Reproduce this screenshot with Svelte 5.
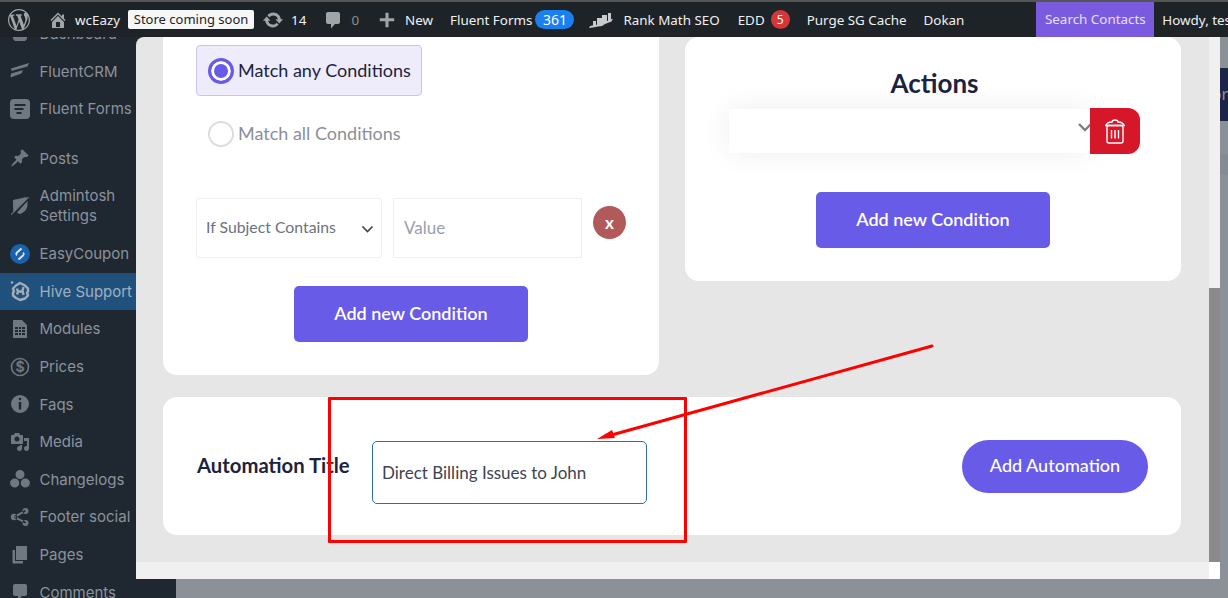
<script lang="ts">
	let title = $state('Direct Billing Issues to John');
	let mode = $state('any');

	const dot = (x: number, y: number, r: number) =>
		`M${x - r} ${y}a${r} ${r} 0 1 0 ${r * 2} 0a${r} ${r} 0 1 0 ${-r * 2} 0z`;

	const comment = 'M5 2h10c1.1 0 2 .9 2 2v8c0 1.1-.9 2-2 2h-3l-4 4.5V14H5c-1.1 0-2-.9-2-2V4c0-1.1.9-2 2-2z';

	const menu = [
		{ label: ['Dashboard'], d: 'M3 1h14v15l-2 2H5l-2-2z', cls: '' },
		{ label: ['FluentCRM'], d: 'M1 7.5 19 2l-1.5 3.5L1.5 10zM1 12.5l12-3.5-1.5 3.5L.5 16.5z', cls: '' },
		{ label: ['Fluent Forms'], d: 'M4 0h12a4 4 0 0 1 4 4v12a4 4 0 0 1-4 4H4a4 4 0 0 1-4-4V4a4 4 0 0 1 4-4zM4.500 5v2h11V5zM4.500 9v2h9V9zM6.500 13v2h5v-2z', cls: 'gap' },
		{ label: ['Posts'], d: 'M10.44 3.02l1.82-1.82 6.36 6.35-1.83 1.82c-1.05-.68-2.48-.57-3.41.36l-.75.75c-.92.93-1.04 2.35-.35 3.41l-1.83 1.82-2.41-2.41-2.8 2.79c-.42.42-3.38 2.71-3.8 2.29s1.86-3.39 2.28-3.81l2.79-2.79L4.1 9.36l1.83-1.82c1.05.69 2.48.57 3.4-.36l.75-.75c.93-.92 1.05-2.35.36-3.41z', cls: '' },
		{ label: ['Admintosh', 'Settings'], d: 'M10 2.500l6.500-1.500.5 1-14 14C3.500 13.500 3 11 3 8.500V4zM19 1.500 1.500 19l-.7-.7L18.300.8zM17.500 5v3.500c0 4.500-3 8-7.500 9.500-1.200-.4-2.200-1-3-1.600z', cls: 'two' },
		{ label: ['EasyCoupon'], d: '', cls: 'coupon' },
		{ label: ['Hive Support'], d: '', cls: 'active' },
		{ label: ['Modules'], d: 'M3 1h9l5 5v13H3zM5 8v2h3V8zM9 8v2h2V8zM12 8v2h3V8zM5 11v2h3v-2zM9 11v2h2v-2zM12 11v2h3v-2zM5 14v2h3v-2zM9 14v2h2v-2zM12 14v2h3v-2z', cls: '' },
		{ label: ['Prices'], d: '', cls: 'price' },
		{ label: ['Faqs'], d: 'M10 1a9 9 0 1 1 0 18 9 9 0 0 1 0-18zm1.300 4a1.300 1.300 0 1 0-2.600 0 1.300 1.300 0 0 0 2.600 0zM11.200 15.500V8H8.800v7.500z', cls: '' },
		{ label: ['Media'], d: 'M13 11V4c0-.55-.45-1-1-1h-1.67L9 1H5L3.67 3H2c-.55 0-1 .45-1 1v7c0 .55.45 1 1 1h10c.55 0 1-.45 1-1zM7 4.500c1.380 0 2.500 1.120 2.500 2.500S8.380 9.500 7 9.500 4.500 8.380 4.500 7 5.620 4.500 7 4.500zM14 6h5v10.500c0 1.380-1.120 2.500-2.500 2.500S14 17.880 14 16.500s1.120-2.500 2.500-2.500c.17 0 .34.02.5.05V9h-3V6zm-4 8.050V13h2v3.500c0 1.380-1.120 2.500-2.500 2.500S7 17.880 7 16.500 8.120 14 9.500 14c.17 0 .34.02.5.05z', cls: '' },
		{ label: ['Changelogs'], d: dot(10, 5.5, 4.5) + dot(4.7, 14, 4.6) + dot(15.3, 14, 4.6), cls: '' },
		{ label: ['Footer social'], d: dot(4, 10, 3.2) + dot(15.500, 4, 3) + dot(15.500, 16, 3) + 'M4 9 15 3l.8 1.600L5 11zM5 9l11 6-.8 1.600L4 11z', cls: '' },
		{ label: ['Pages'], d: 'M6 15V1h11v14H6zm-1 1h8v2.500H2.500V5H5v11z', cls: '' },
		{ label: ['Comments'], d: comment, cls: '' }
	];
</script>

<div class="screen">
	<header class="adminbar">
		<svg class="wp" viewBox="0 0 20 20"><path d="M20 10c0-5.510-4.490-10-10-10C4.480 0 0 4.490 0 10c0 5.520 4.480 10 10 10 5.510 0 10-4.480 10-10zM7.780 15.370L4.370 6.220c.55-.02 1.170-.08 1.170-.08.5-.06.44-1.130-.06-1.110 0 0-1.450.11-2.370.11-.18 0-.37 0-.58-.01C4.120 2.690 6.870 1.110 10 1.110c2.330 0 4.450.87 6.050 2.340-.68-.11-1.650.39-1.650 1.580 0 .74.45 1.360.9 2.100.35.61.55 1.360.55 2.460 0 1.490-1.400 5-1.400 5l-3.030-8.370c.54-.02.82-.17.82-.17.5-.05.44-1.250-.06-1.220 0 0-1.440.12-2.380.12-.87 0-2.330-.12-2.330-.12-.5-.03-.56 1.200-.06 1.220l.92.08 1.260 3.410zM17.410 10c.24-.64.74-1.870.43-4.250.7 1.290 1.050 2.710 1.050 4.250 0 3.290-1.730 6.240-4.400 7.780.97-2.590 1.940-5.200 2.920-7.780zM6.100 18.090C3.120 16.650 1.110 13.530 1.110 10c0-1.300.23-2.480.72-3.590C3.250 10.300 4.670 14.200 6.100 18.090zm4.030-6.630l2.580 6.980c-.86.29-1.760.45-2.710.45-.79 0-1.570-.11-2.290-.33.81-2.380 1.620-4.740 2.420-7.100z" /></svg>
		<svg class="home" viewBox="0 0 20 20"><path d="M16 8.500l1.530 1.530-1.060 1.060L10 4.620l-6.470 6.470-1.060-1.060L10 2.500l4 4v-2h2v4zm-6-2.460l6 5.990V18H4v-5.970zM12 17v-5H8v5h4z" /></svg>
		<span class="site">wcEazy</span>
		<span class="pill">Store coming soon</span>
		<svg class="updates" viewBox="0 0 20 20"><path d="M10.200 3.280c3.530 0 6.430 2.610 6.920 6h2.080l-3.500 4-3.500-4h2.320c-.45-1.970-2.210-3.450-4.320-3.450-1.450 0-2.730.71-3.540 1.780L4.950 5.660C6.230 4.200 8.110 3.280 10.200 3.280zm-.4 13.440c-3.520 0-6.430-2.610-6.920-6H.8l3.500-4c1.170 1.330 2.330 2.670 3.500 4H5.480c.45 1.970 2.210 3.450 4.320 3.450 1.450 0 2.730-.71 3.540-1.780l1.710 1.950c-1.280 1.460-3.150 2.380-5.250 2.380z" /></svg>
		<span class="count">14</span>
		<svg class="bubble" viewBox="0 0 20 20"><path d={comment} /></svg>
		<span class="zero">0</span>
		<svg class="plus" viewBox="0 0 20 20"><path d="M18 8v3.500h-6.300V18H8.300v-6.500H2V8h6.300V2h3.400v6z" /></svg>
		<span class="new">New</span>
		<span class="forms">Fluent Forms</span>
		<span class="badge blue">361</span>
		<svg class="rank" viewBox="0 0 24 20"><path d="M8 8h5V5h5v7l-5 1.500-5 1.500zM19 3h3v7.500L19 11.500zM4 11h3v4.500l-3 1zM0 18l1-2 7-1.500 8-2.500 8-3.500-1.500 3-6.500 2.500-3 2-4 .5-5 1z" /></svg>
		<span class="rankmath">Rank Math SEO</span>
		<span class="edd">EDD</span>
		<span class="badge red">5</span>
		<span class="purge">Purge SG Cache</span>
		<span class="dokan">Dokan</span>
		<span class="search">Search Contacts</span>
		<span class="howdy">Howdy, test</span>
	</header>

	<div class="body">
		<nav class="sidebar">
			<ul>
				{#each menu as item}
					<li class={item.cls}>
						<span class="icon">
							{#if item.cls === 'coupon'}
								<svg viewBox="0 0 20 20"><circle cx="10" cy="10" r="10" fill="#1a62ab" /><path d="M11.500 4.500 7 8.500c-1 1-1 2 0 2.700M8.500 15.500l4.500-4c1-1 1-2 0-2.700" fill="none" stroke="#dfe7ef" stroke-width="1.800" /></svg>
							{:else if item.cls === 'active'}
								<svg class="hive" viewBox="0 0 20 22"><path d="M6 5.500 10 3l5 2.500 3 3v3l-1 1 1 3-3 3-5 1.500-4-2-3-2.500v-3l1-1-1-3zM7 8.500l1 3.500-1 2.500M13.500 7l-1 3.500 1 4.500M7.500 11.500h5" fill="none" stroke="#a3aeb8" stroke-width="2.400" stroke-linejoin="round" /><circle cx="2" cy="2.500" r="1.300" fill="#a3aeb8" /></svg>
							{:else if item.cls === 'price'}
								<svg viewBox="0 0 20 20"><circle cx="10" cy="10" r="8.500" fill="none" stroke="#6f7781" stroke-width="1.600" /><text x="10" y="15" text-anchor="middle" font-size="14" font-weight="700" fill="#6f7781">$</text></svg>
							{:else}
								<svg viewBox="0 0 20 20"><path fill-rule="evenodd" d={item.d} /></svg>
							{/if}
						</span>
						<span class="label">
							{#each item.label as line}<span>{line}</span>{/each}
						</span>
					</li>
				{/each}
			</ul>
		</nav>
		<div class="page">
			<div class="banner"><span>For</span></div>
			<div class="band"></div>
		</div>
	</div>

	<section class="modal">
		<div class="scroll">
			<div class="columns">
				<div class="card conditions">
					<label class="match" class:on={mode === 'any'}>
						<input type="radio" bind:group={mode} value="any" />
						<i></i>
						<span>Match any Conditions</span>
					</label>
					<label class="match" class:on={mode === 'all'}>
						<input type="radio" bind:group={mode} value="all" />
						<i></i>
						<span>Match all Conditions</span>
					</label>
					<div class="rule">
						<div class="pick">
							<select><option>If Subject Contains</option></select>
							<svg viewBox="0 0 12 8"><path d="M1 1.500 6 6.500l5-5" fill="none" stroke="#444" stroke-width="1.700" /></svg>
						</div>
						<input class="value" placeholder="Value" />
						<button class="remove">x</button>
					</div>
					<button class="add">Add new Condition</button>
				</div>
				<div class="card actions">
					<h2>Actions</h2>
					<div class="action">
						<div class="pick wide">
							<select></select>
							<svg viewBox="0 0 14 9"><path d="M1 1 7 7l6-6" fill="none" stroke="#7b8087" stroke-width="2.400" /></svg>
						</div>
						<button class="trash" aria-label="Delete">
							<svg viewBox="0 0 22 25" fill="none" stroke="#fff" stroke-width="1.400"><path d="M1 6.500h20M2 6.500C3 3.500 6 3 8 3c0-1 1-2 3-2s3 1 3 2c2 0 5 .5 6 3.500" /><rect x="3" y="6.500" width="16" height="17.500" rx="2" /><path d="M7.500 11v8.500M11 11v8.500M14.500 11v8.500" /></svg>
						</button>
					</div>
					<button class="add">Add new Condition</button>
				</div>
			</div>
			<div class="card titlebar">
				<span class="name">Automation Title</span>
				<input class="titlefield" bind:value={title} />
				<button class="save">Add Automation</button>
			</div>
		</div>
		<div class="track"><div class="thumb"></div></div>
		<div class="htrack"></div>
		<div class="corner"></div>
	</section>

	<!-- annotation drawn on top of the screenshot -->
	<div class="redbox"></div>
	<svg class="arrow" viewBox="0 0 1228 598">
		<path d="M932 346 608 436" stroke="#f00" stroke-width="3" stroke-linecap="round" />
		<path d="M597 439 612 430 615 438z" fill="#f00" />
	</svg>
</div>

<style>
	:global(body) {
		margin: 0;
	}
	.screen {
		position: relative;
		width: 1228px;
		height: 598px;
		overflow: hidden;
		display: flex;
		flex-direction: column;
		background: #8c9097;
		font-family: 'Noto Sans', sans-serif;
	}

	.adminbar {
		flex: none;
		height: 35px;
		border-top: 2px solid #555;
		background: #1d2327;
		display: flex;
		align-items: center;
		color: #f0f0f1;
		font-size: 13.4px;
		white-space: nowrap;
		overflow: hidden;
	}
	.adminbar > * {
		flex: none;
	}
	.adminbar svg {
		fill: #a0a5aa;
	}
	.wp {
		width: 22px;
		height: 22px;
		margin-left: 8px;
	}
	.home {
		width: 20px;
		height: 20px;
		margin-left: 18px;
	}
	.site {
		margin-left: 7px;
	}
	.pill {
		margin-left: 8px;
		width: 126px;
		height: 19px;
		line-height: 19px;
		text-align: center;
		background: #f6f7f7;
		color: #1d2327;
		border-radius: 2px;
		font-size: 13px;
	}
	.updates {
		width: 22px;
		height: 22px;
		margin-left: 8px;
	}
	.count {
		margin-left: 7px;
	}
	.bubble {
		width: 20px;
		height: 20px;
		margin-left: 17px;
	}
	.zero {
		margin-left: 8px;
		color: #8c8f94;
	}
	.plus {
		width: 18px;
		height: 18px;
		margin-left: 19px;
	}
	.new {
		margin-left: 9px;
	}
	.forms {
		margin-left: 17px;
	}
	.badge {
		height: 19px;
		line-height: 19px;
		text-align: center;
		color: #fff;
		border-radius: 10px;
	}
	.blue {
		width: 39px;
		margin-left: 3px;
		background: #1a7fef;
		font-size: 14px;
	}
	.red {
		width: 19px;
		margin-left: 6px;
		background: #d63638;
		font-size: 12px;
	}
	.rank {
		width: 24px;
		height: 20px;
		margin-left: 15px;
	}
	.adminbar .rank {
		fill: #c8cacc;
	}
	.rankmath {
		margin-left: 10px;
	}
	.edd {
		margin-left: 18px;
	}
	.purge {
		margin-left: 17px;
	}
	.dokan {
		margin-left: 17px;
	}
	.search {
		margin-left: 72px;
		width: 118px;
		line-height: 35px;
		text-align: center;
		background: #7a5be0;
		color: #e5e0fa;
	}
	.howdy {
		margin-left: 8px;
	}

	.body {
		flex: 1;
		min-height: 0;
		display: flex;
	}
	.sidebar {
		flex: none;
		width: 176px;
		background: #1f2730;
		overflow: hidden;
	}
	.sidebar ul {
		list-style: none;
		margin: -22.4px 0 0;
		padding: 0;
		font-family: Inter, sans-serif;
		font-size: 15px;
		color: #8b939c;
	}
	.sidebar li {
		height: 37.6px;
		display: flex;
		align-items: center;
	}
	.sidebar li.gap {
		margin-bottom: 12px;
	}
	.sidebar li.two {
		height: 58px;
		line-height: 20px;
	}
	.sidebar li.active {
		background: #20517d;
		color: #9fb0c0;
		width: 136px;
	}
	.icon {
		width: 20px;
		height: 20px;
		margin: 0 9.5px 0 10px;
		flex: none;
	}
	.icon svg {
		display: block;
		width: 20px;
		height: 20px;
		fill: #6f7781;
	}
	.icon svg.hive {
		height: 22px;
		margin-top: -1px;
	}
	.label {
		display: flex;
		flex-direction: column;
		white-space: nowrap;
	}

	.page {
		flex: 1;
		padding-top: 31px;
	}
	.banner {
		height: 53px;
		background: #1c2448;
		color: #94907f;
		font-size: 16px;
		line-height: 53px;
		display: flex;
		justify-content: flex-end;
		overflow: hidden;
		white-space: nowrap;
	}
	.band {
		height: 21px;
		margin-top: 33px;
		background: #868a92;
	}

	.modal {
		position: absolute;
		left: 136px;
		top: 37px;
		width: 1084px;
		height: 542px;
		display: grid;
		grid-template-columns: 1073px 11px;
		grid-template-rows: 525px 17px;
		border-top-left-radius: 8px;
		overflow: hidden;
		font-family: Lato, sans-serif;
	}
	.scroll {
		background: #e6e6e6;
		padding: 0 28px 0 27px;
		overflow: hidden;
	}
	.track {
		background: #f0f0f0;
		display: flex;
		align-items: flex-end;
	}
	.thumb {
		width: 100%;
		height: 274px;
		background: #8a8a8a;
	}
	.htrack {
		background: #f0f0f0;
	}
	.corner {
		background: #fff;
	}

	.columns {
		display: flex;
		align-items: flex-start;
		gap: 26px;
	}
	.card {
		background: #fff;
		border-radius: 14px;
	}
	.conditions {
		width: 496px;
		margin-top: -20px;
		padding: 28px 0 33px 33px;
		box-sizing: border-box;
	}
	.actions {
		width: 496px;
		box-sizing: border-box;
		padding: 30px 41px 33px 44px;
		text-align: center;
	}
	.actions h2 {
		margin: 0 0 9px;
		font-size: 26px;
		line-height: 32px;
		font-weight: 700;
		color: #1c2340;
	}

	.match {
		width: 226px;
		height: 51px;
		box-sizing: border-box;
		display: flex;
		align-items: center;
		gap: 4px;
		padding-left: 11px;
		border: 1px solid transparent;
		border-radius: 4px;
		font-size: 18px;
		color: #8a8f9a;
		margin-bottom: 12px;
	}
	.match span {
		padding-bottom: 2px;
	}
	.match.on {
		background: #eeecfb;
		border-color: #c8c2f5;
		color: #1c2340;
	}
	.match input {
		display: none;
	}
	.match i {
		width: 26px;
		height: 26px;
		box-sizing: border-box;
		border: 2px solid #dcdcdc;
		border-radius: 50%;
		background: #fff;
		flex: none;
	}
	.match.on i {
		border: 3px solid #685be7;
		box-shadow: inset 0 0 0 3px #fff;
		background: #685be7;
	}

	.rule {
		display: flex;
		align-items: flex-start;
		margin-top: 39px;
	}
	.pick {
		position: relative;
	}
	.pick svg {
		position: absolute;
		right: 8px;
		top: 27px;
		width: 13px;
		height: 8px;
	}
	select {
		appearance: none;
		display: block;
		width: 186px;
		height: 60px;
		box-sizing: border-box;
		padding: 0 0 3px 9px;
		border: 1px solid #eee;
		border-radius: 3px;
		background: #fff;
		font: 15.8px Lato, sans-serif;
		color: #6b7280;
	}
	.value {
		width: 189px;
		height: 60px;
		box-sizing: border-box;
		margin-left: 11px;
		padding: 0 10px 1px;
		border: 1px solid #eee;
		font: 17px Lato, sans-serif;
	}
	.value::placeholder {
		color: #9aa0ab;
	}
	.remove {
		width: 33px;
		height: 33px;
		margin: 8px 0 0 11px;
		padding: 0;
		border: 0;
		border-radius: 50%;
		background: #b25a5a;
		color: #fff;
		font: 700 17px Lato, sans-serif;
	}
	.add {
		display: block;
		width: 234px;
		height: 56px;
		border: 0;
		border-radius: 5px;
		background: #685be7;
		color: #fff;
		font: 600 18px Lato, sans-serif;
		padding: 0 0 2px;
	}
	.conditions .add {
		margin: 28px 0 0 98px;
	}
	.actions .add {
		margin: 38px 0 0 87px;
	}

	.action {
		display: flex;
		align-items: center;
	}
	.wide select {
		width: 361px;
		height: 44px;
		border: 0;
		border-radius: 4px 0 0 4px;
	}
	.wide {
		box-shadow: 0 0 30px rgba(0, 0, 0, 0.07);
	}
	.pick.wide svg {
		right: -2px;
		top: 14px;
		width: 14px;
		height: 9px;
	}
	.trash {
		position: relative;
		width: 50px;
		height: 46px;
		padding: 0;
		border: 0;
		border-radius: 0 12px 12px 0;
		background: #d6172a;
		display: flex;
		align-items: center;
		justify-content: center;
	}
	.trash svg {
		width: 22px;
		height: 25px;
	}

	.titlebar {
		margin-top: 22px;
		height: 138px;
		display: flex;
		align-items: center;
		padding: 0 33px 0 34px;
	}
	.name {
		width: 175px;
		flex: none;
		font-size: 20.3px;
		font-weight: 700;
		color: #1c2340;
		white-space: nowrap;
		padding-bottom: 2px;
	}
	.titlefield {
		width: 275px;
		height: 63px;
		box-sizing: border-box;
		margin-top: 13px;
		padding: 0 9px;
		border: 1px solid #2a6fa8;
		border-radius: 5px;
		font: 17px Lato, sans-serif;
		color: #3d4452;
	}
	.save {
		margin-left: auto;
		width: 186px;
		height: 53px;
		border: 0;
		border-radius: 27px;
		background: #685be7;
		color: #fff;
		font: 500 18px Lato, sans-serif;
		padding: 0 0 2px;
	}

	.redbox {
		position: absolute;
		left: 328px;
		top: 397px;
		width: 353px;
		height: 140px;
		border: 3px solid #f00;
		border-radius: 1px;
		pointer-events: none;
	}
	.arrow {
		position: absolute;
		inset: 0;
		width: 1228px;
		height: 598px;
		pointer-events: none;
	}
</style>
